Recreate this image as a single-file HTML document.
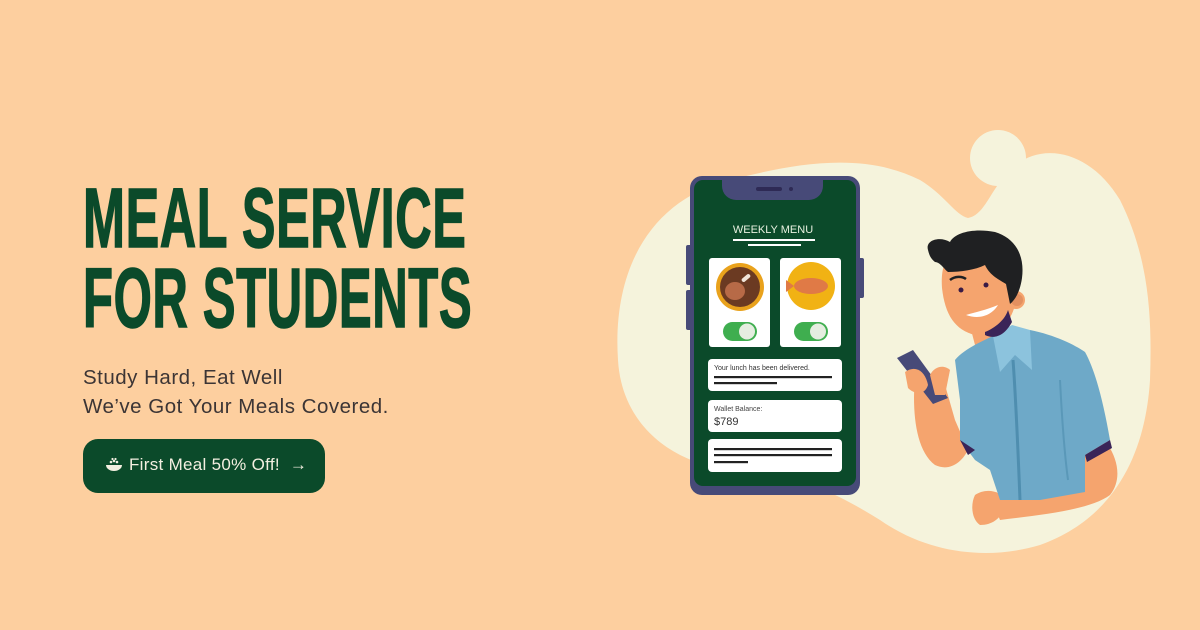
<!DOCTYPE html>
<html><head><meta charset="utf-8"><style>
body{margin:0;width:1200px;height:630px;background:#fdcf9f;overflow:hidden;position:relative;font-family:"Liberation Sans",sans-serif}
.h{position:absolute;left:83px;font-weight:bold;color:#0b4a2a;font-size:84px;line-height:84px;transform-origin:left top;white-space:nowrap;letter-spacing:1px;-webkit-text-stroke:1.5px #0b4a2a}
.sub{position:absolute;left:83px;top:363px;font-size:20.5px;line-height:29px;color:#3c3535;letter-spacing:0.5px}
.btn{position:absolute;left:83px;top:439px;width:242px;height:54px;border-radius:15px;background:#0b4a2a;color:#f3efe0;font-size:17px}
.btn span{position:absolute;left:46px;top:16px;letter-spacing:0.3px;white-space:nowrap}
</style></head><body>
<div class="h" style="top:176px;transform:scaleX(0.6)">MEAL SERVICE</div>
<div class="h" style="top:256px;transform:scaleX(0.585)">FOR STUDENTS</div>
<div class="sub">Study Hard, Eat Well<br>We’ve Got Your Meals Covered.</div>
<div class="btn">
<svg style="position:absolute;left:22px;top:18px" width="18" height="16" viewBox="0 0 18 16"><path d="M1 8h16a8 6 0 0 1-16 0z" fill="#f3efe0"/><circle cx="6" cy="5" r="1.3" fill="#f3efe0"/><circle cx="9" cy="4" r="1.3" fill="#f3efe0"/><circle cx="12" cy="5" r="1.3" fill="#f3efe0"/><circle cx="7.5" cy="2" r="1.1" fill="#f3efe0"/><circle cx="10.5" cy="2" r="1.1" fill="#f3efe0"/></svg>
<span>First Meal 50% Off! &nbsp;→</span></div>
<svg style="position:absolute;left:0;top:0" width="1200" height="630" viewBox="0 0 1200 630">
<path d="M618 360C612 270 650 200 730 180C790 165 860 150 920 180C945 195 955 215 968 218C985 215 990 190 1010 170C1040 140 1090 150 1120 200C1150 260 1152 320 1150 380C1145 460 1110 520 1040 545C990 560 930 555 880 520C840 495 790 470 740 470C680 468 622 430 618 360Z" fill="#f5f3dc"/>
<circle cx="998" cy="158" r="28" fill="#f5f3dc"/>
<rect x="686" y="245" width="6" height="40" rx="2" fill="#474a78"/>
<rect x="686" y="290" width="6" height="40" rx="2" fill="#474a78"/>
<rect x="858" y="258" width="6" height="40" rx="2" fill="#474a78"/>
<rect x="690" y="176" width="170" height="319" rx="12" fill="#474a78"/>
<rect x="694" y="180" width="162" height="306" rx="9" fill="#0b4a2a"/>
<path d="M722 178h101v8a14 14 0 0 1-14 14h-73a14 14 0 0 1-14-14z" fill="#474a78"/>
<rect x="756" y="187" width="26" height="4" rx="2" fill="#2e2a55"/><circle cx="791" cy="189" r="2" fill="#2e2a55"/>
<text x="773" y="233" text-anchor="middle" font-family="Liberation Sans,sans-serif" font-size="11" fill="#e8f1e0">WEEKLY MENU</text>
<rect x="733" y="239" width="82" height="2" fill="#fff"/><rect x="748" y="244" width="53" height="2" fill="#fff"/>
<rect x="709" y="258" width="61" height="89" rx="3" fill="#fff"/>
<rect x="780" y="258" width="61" height="89" rx="3" fill="#fff"/>
<circle cx="740" cy="287" r="24" fill="#e9a21c"/><circle cx="740" cy="287" r="20" fill="#6b3a22"/>
<ellipse cx="735" cy="291" rx="10" ry="9" fill="#b76a47"/><rect x="741" y="276" width="10" height="4" rx="2" fill="#f0e4d8" transform="rotate(-40 746 278)"/>
<circle cx="811" cy="286" r="24" fill="#f1b214"/><ellipse cx="811" cy="286" rx="17" ry="8" fill="#e07a46"/><path d="M794 286l-8-6v12z" fill="#e07a46"/>
<rect x="723" y="322" width="34" height="19" rx="9.5" fill="#3fae4f"/><circle cx="747" cy="331.5" r="8" fill="#e5ede0"/>
<rect x="794" y="322" width="34" height="19" rx="9.5" fill="#3fae4f"/><circle cx="818" cy="331.5" r="8" fill="#e5ede0"/>
<rect x="708" y="359" width="134" height="32" rx="4" fill="#fff"/>
<text x="714" y="370" font-family="Liberation Sans,sans-serif" font-size="7" fill="#333">Your lunch has been delivered.</text>
<rect x="714" y="376" width="118" height="2.2" fill="#222"/><rect x="714" y="382" width="63" height="2.2" fill="#222"/>
<rect x="708" y="400" width="134" height="32" rx="4" fill="#fff"/>
<text x="714" y="411" font-family="Liberation Sans,sans-serif" font-size="7" fill="#444">Wallet Balance:</text>
<text x="714" y="425" font-family="Liberation Sans,sans-serif" font-size="11" fill="#333">$789</text>
<rect x="708" y="439" width="134" height="33" rx="4" fill="#fff"/>
<rect x="714" y="448" width="118" height="2.2" fill="#222"/><rect x="714" y="454" width="118" height="2.2" fill="#222"/><rect x="714" y="461" width="34" height="2.2" fill="#222"/>
<!-- person -->
<path d="M1095 430L1108 445C1118 460 1122 480 1110 495C1090 510 1040 515 1000 520L990 495L1080 470Z" fill="#f5a46e"/>
<path d="M915 375C912 410 915 450 935 465C950 472 962 462 968 450L955 420L945 385Z" fill="#f5a46e"/>
<path d="M975 495C985 488 1000 490 1005 500C1005 515 995 525 980 525C972 520 970 505 975 495Z" fill="#f5a46e"/>
<path d="M968 318L975 345L1000 350L1005 320Z" fill="#f5a46e"/>
<path d="M955 360C965 348 985 340 995 335L1030 330C1055 335 1075 345 1085 352C1095 370 1103 400 1110 440L1085 455L1085 492L1040 500L1000 500L990 470L975 460L960 440L960 400Z" fill="#6ea9c8"/>
<path d="M960 440L968 455L975 450Z" fill="#3a2458"/><path d="M1085 455L1110 440L1112 448L1087 462Z" fill="#3a2458"/>
<path d="M993 336L1000 372L1015 355L1032 370L1030 330L1012 325Z" fill="#8cc3dd"/>
<path d="M1013 360C1016 400 1018 450 1020 500" stroke="#4f8eaf" stroke-width="3" fill="none"/>
<path d="M1060 380C1062 420 1064 450 1068 480" stroke="#5a98b8" stroke-width="2" fill="none"/>
<path d="M942 288C940 260 950 248 975 248C1005 250 1018 272 1015 305C1010 325 995 338 975 335C955 330 945 315 942 288Z" fill="#f5a46e"/>
<path d="M985 332C995 328 1005 320 1008 310L1012 322C1005 335 995 340 985 335Z" fill="#3a2458"/>
<circle cx="1016" cy="300" r="9" fill="#f5a46e"/><circle cx="1017" cy="300" r="6" fill="#e39060"/>
<path d="M928 250C925 240 940 236 950 242C955 232 975 228 995 232C1015 238 1025 255 1022 278C1020 292 1015 300 1010 304L1006 284C1000 280 990 276 985 265C975 270 960 272 948 272C945 270 940 262 935 262C930 258 929 254 928 250Z" fill="#1f2022"/>
<path d="M950 280C955 276 962 276 966 279" stroke="#1f2022" stroke-width="2.5" fill="none"/>
<circle cx="961" cy="290" r="2.5" fill="#3a1a45"/><circle cx="986" cy="285" r="2.5" fill="#3a1a45"/>
<path d="M966 315C980 320 992 315 998 305C986 310 976 312 966 315Z" fill="#fff"/>
<path d="M897 358L913 350L948 398L933 404Z" fill="#474a78"/>
<path d="M905 372C915 365 925 370 928 385C925 395 915 395 908 388Z" fill="#f5a46e"/>
<path d="M930 375C935 365 945 365 950 370L945 395L935 395Z" fill="#f5a46e"/>
</svg>
</body></html>
